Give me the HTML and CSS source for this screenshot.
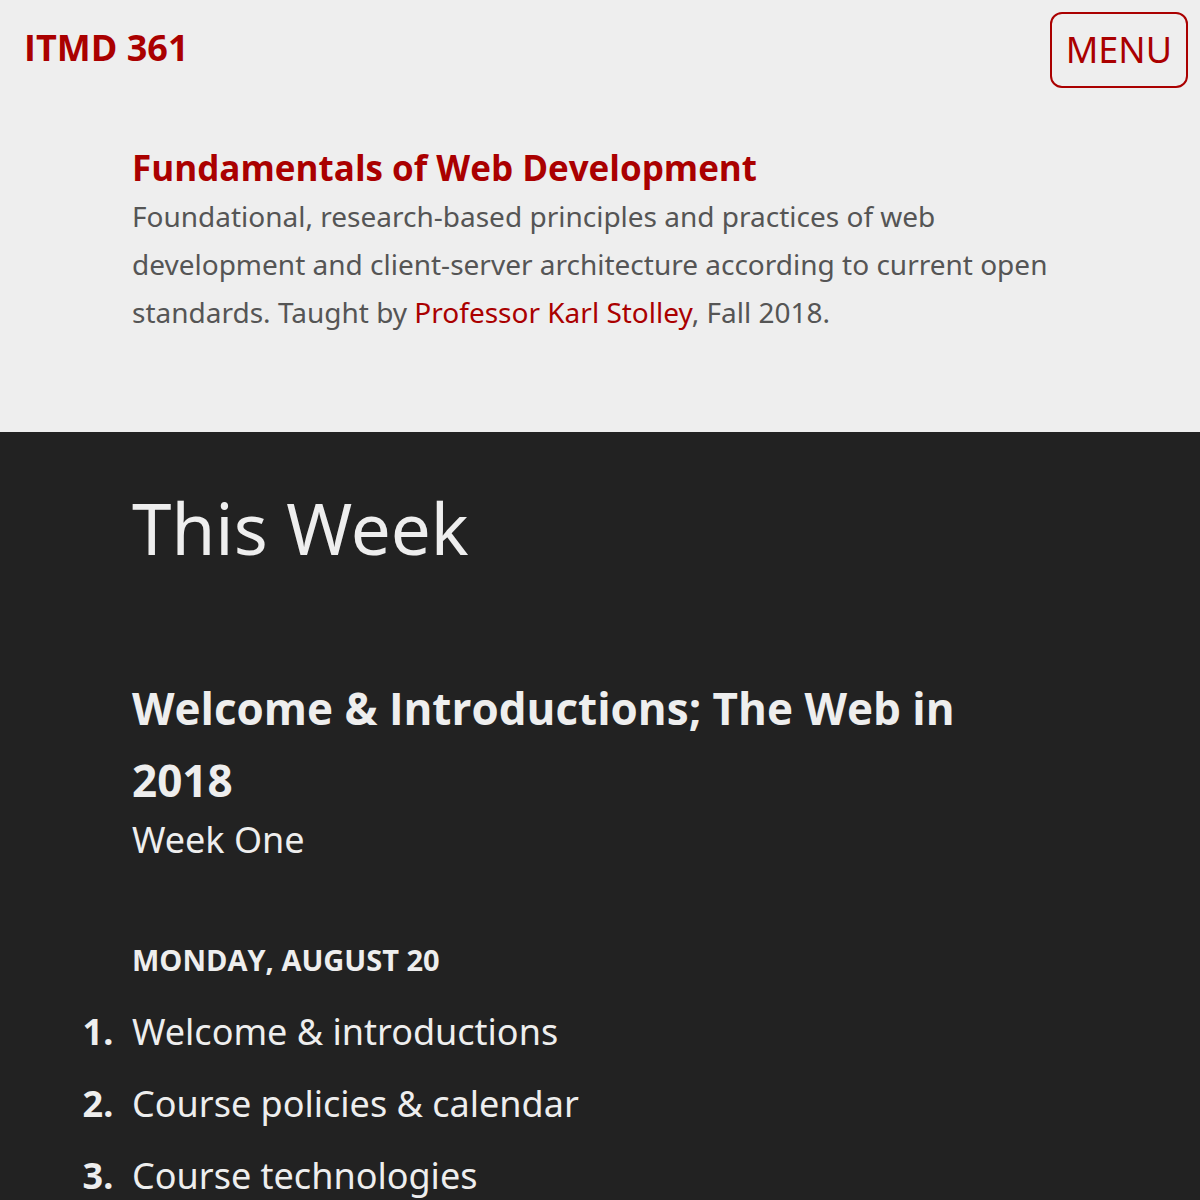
FILE: index.html
```html
<!DOCTYPE html>
<html lang="en">
<head>
<meta charset="utf-8">
<meta name="viewport" content="width=device-width, initial-scale=1">
<title>ITMD 361</title>
<link rel="stylesheet" href="styles.css">
</head>
<body>
<header class="masthead">
  <div class="bar">
    <a class="brand" href="#top">ITMD 361</a>
    <button class="menu" type="button">MENU</button>
  </div>
  <div class="intro">
    <h1 class="intro-title">Fundamentals of Web Development</h1>
    <p class="intro-text">Foundational, research-based principles and practices of web development and client-server architecture according to current open standards. Taught by <a href="#professor">Professor Karl Stolley</a>, Fall 2018.</p>
  </div>
</header>
<main class="week">
  <h2 class="week-heading">This Week</h2>
  <h3 class="topic">Welcome &amp; Introductions; The Web in 2018</h3>
  <p class="week-number">Week One</p>
  <h4 class="day">MONDAY, AUGUST 20</h4>
  <ol class="agenda">
    <li>Welcome &amp; introductions</li>
    <li>Course policies &amp; calendar</li>
    <li>Course technologies</li>
  </ol>
</main>
</body>
</html>
```

FILE: styles.css
```css
@counter-style agenda-number {
  system: extends decimal;
  suffix: ".  ";
}

* {
  box-sizing: border-box;
}

body {
  margin: 0;
  background: #222;
  color: #eee;
  font-family: "Noto Sans", sans-serif;
  font-size: 36px;
  line-height: 72px;
}

h1, h2, h3, h4, p, ol {
  margin: 0;
}

a {
  color: #a00;
  text-decoration: none;
}

.masthead {
  background: #eee;
  color: #555;
  padding-bottom: 96px;
}

.bar {
  display: flex;
  justify-content: space-between;
  align-items: flex-start;
  padding: 12px 12px 0 24px;
}

.brand,
.intro-title,
.topic,
.day {
  font-family: "Open Sans", "Noto Sans", sans-serif;
  font-weight: 700;
}

.menu {
  padding: 0 14px;
  border: 2px solid #a00;
  border-radius: 12px;
  background: transparent;
  color: #a00;
  font: inherit;
}

.intro {
  padding: 56px 132px 0;
}

.intro-title {
  color: #a00;
  font-size: 35px;
  line-height: 48px;
}

.intro-text {
  font-size: 28px;
  line-height: 48px;
}

.week {
  padding: 48px 132px 0;
}

.week-heading {
  font-size: 71px;
  font-weight: 400;
  line-height: 96px;
}

.topic {
  max-width: 900px;
  margin-top: 96px;
  font-size: 44px;
}

.week-number {
  line-height: 48px;
}

.day {
  margin-top: 60px;
  font-size: 29px;
}

.agenda {
  padding: 0;
  list-style: agenda-number;
}

.agenda li::marker {
  font-weight: 700;
}
```
